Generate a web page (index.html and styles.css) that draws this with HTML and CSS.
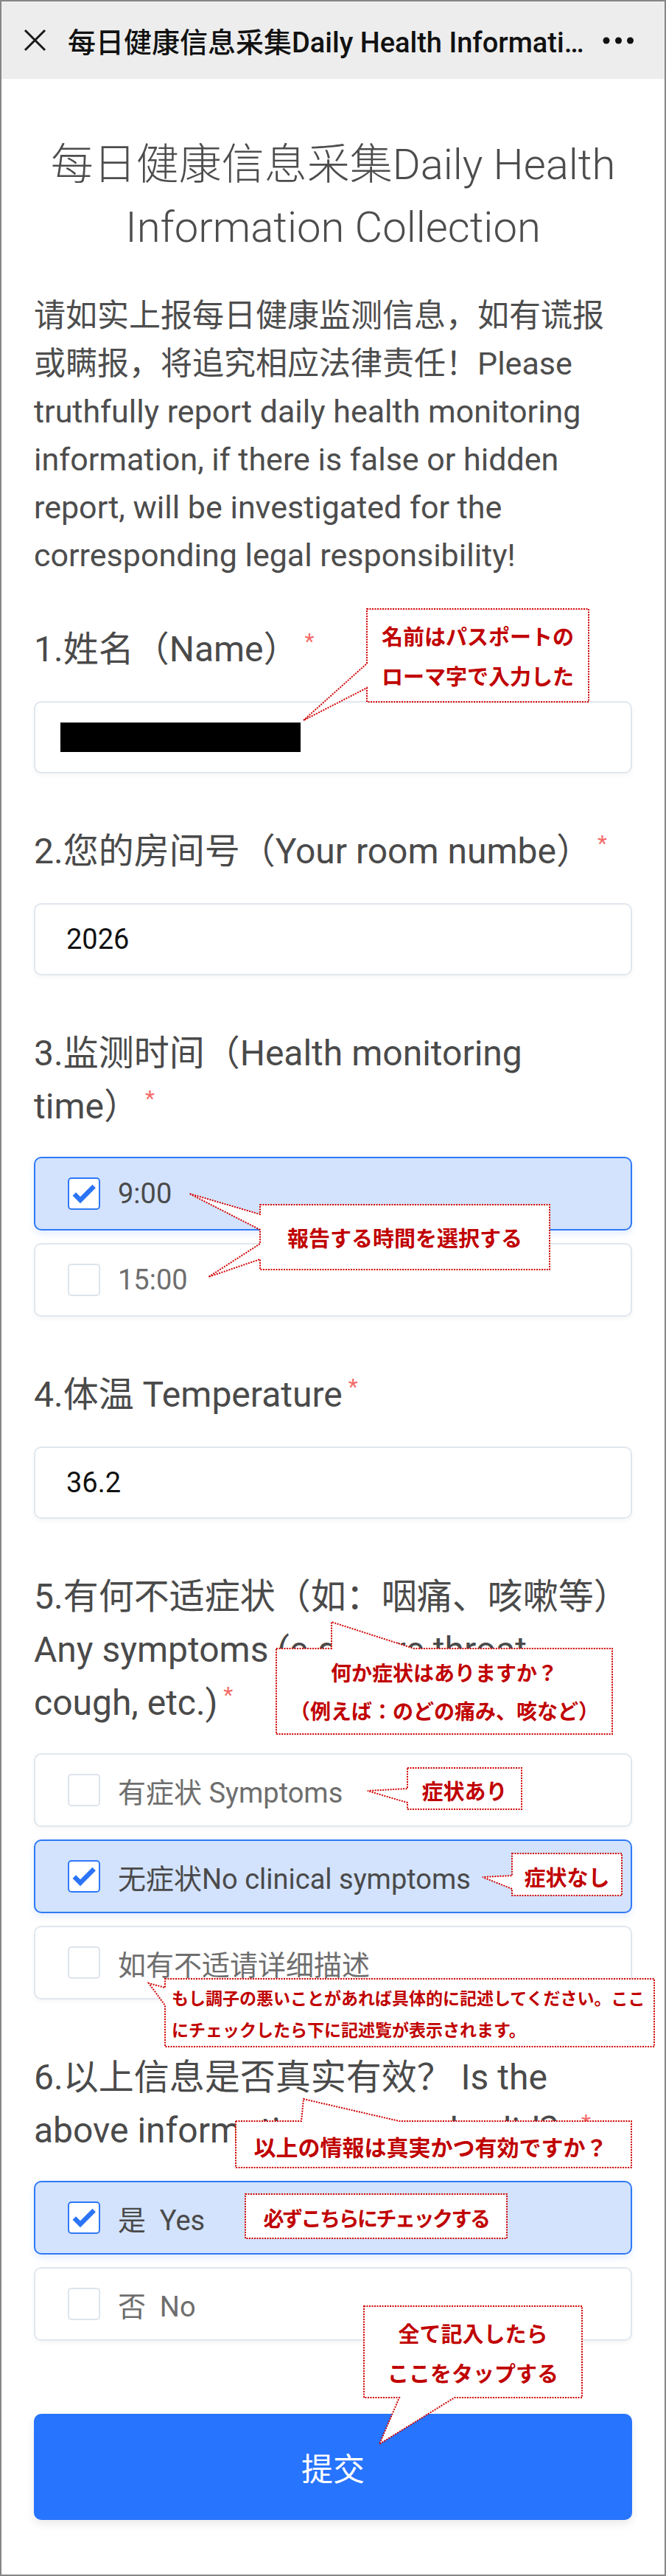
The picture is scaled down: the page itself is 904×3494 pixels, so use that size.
FILE: index.html
```html
<!DOCTYPE html>
<html lang="zh-CN">
<head>
    <meta charset="UTF-8">
    <meta name="viewport" content="width=device-width, initial-scale=1.0">
    <title>每日健康信息采集Daily Health Information Collection</title>
    <link rel="stylesheet" href="styles.css">
</head>
<body>

    <div class="phone">
        <header class="topbar">
            <svg class="close-icon" width="31" height="31" viewBox="0 0 31 31">
                <path d="M2 2 L29 29 M29 2 L2 29" />
            </svg>
            <div class="topbar-title">每日健康信息采集Daily Health Information Collection</div>
            <svg class="more-icon" width="42" height="10" viewBox="0 0 42 10">
                <circle cx="5" cy="5" r="4.5" />
                <circle cx="21.5" cy="5" r="4.5" />
                <circle cx="37.5" cy="5" r="4.5" />
            </svg>
        </header>

        <main class="survey">
            <h1 class="survey-title">每日健康信息采集Daily Health Information Collection</h1>
            <p class="survey-desc">请如实上报每日健康监测信息，如有谎报或瞒报，将追究相应法律责任！Please truthfully report daily health monitoring information, if there is false or hidden report, will be investigated for the corresponding legal responsibility!</p>

            <!-- 1 -->
            <div class="question">
                <div class="question-title">1.姓名（Name）<span class="required">*</span></div>
                <div class="text-box name-box"><span class="redacted"></span></div>
            </div>

            <!-- 2 -->
            <div class="question">
                <div class="question-title">2.您的房间号（Your room numbe）<span class="required">*</span></div>
                <div class="text-box">2026</div>
            </div>

            <!-- 3 -->
            <div class="question">
                <div class="question-title">3.监测时间（Health monitoring time）<span class="required">*</span></div>
                <div class="options">
                    <div class="option checked">
                        <span class="checkbox"><svg viewBox="0 0 44 44"><path d="M7.5 22.5 L16.5 31.5 L37 11" /></svg></span>
                        <span class="option-text">9:00</span>
                    </div>
                    <div class="option">
                        <span class="checkbox"></span>
                        <span class="option-text">15:00</span>
                    </div>
                </div>
            </div>

            <!-- 4 -->
            <div class="question">
                <div class="question-title">4.体温 Temperature<span class="required">*</span></div>
                <div class="text-box">36.2</div>
            </div>

            <!-- 5 -->
            <div class="question">
                <div class="question-title">5.有何不适症状（如：咽痛、咳嗽等）Any symptoms (e.g. sore throat, cough, etc.)<span class="required">*</span></div>
                <div class="options">
                    <div class="option">
                        <span class="checkbox"></span>
                        <span class="option-text">有症状 Symptoms</span>
                    </div>
                    <div class="option checked">
                        <span class="checkbox"><svg viewBox="0 0 44 44"><path d="M7.5 22.5 L16.5 31.5 L37 11" /></svg></span>
                        <span class="option-text">无症状No clinical symptoms</span>
                    </div>
                    <div class="option">
                        <span class="checkbox"></span>
                        <span class="option-text">如有不适请详细描述</span>
                    </div>
                </div>
            </div>

            <!-- 6 -->
            <div class="question">
                <div class="question-title">6.以上信息是否真实有效？ Is the above information true and valid？<span class="required">*</span></div>
                <div class="options">
                    <div class="option checked">
                        <span class="checkbox"><svg viewBox="0 0 44 44"><path d="M7.5 22.5 L16.5 31.5 L37 11" /></svg></span>
                        <span class="option-text">是&nbsp; Yes</span>
                    </div>
                    <div class="option">
                        <span class="checkbox"></span>
                        <span class="option-text">否&nbsp; No</span>
                    </div>
                </div>
            </div>

            <button class="submit-btn">提交</button>
        </main>
    </div>

    <!-- 注释气泡 -->
    <div class="note note-name" lang="ja">
        <svg width="303" height="128"><path d="M1 1 H302 V127 H1 V108 L-85 152 L1 75 Z" /></svg>
        <div class="note-text">名前はパスポートの<br>ローマ字で入力した</div>
    </div>

    <div class="note note-time" lang="ja">
        <svg width="395" height="90"><path d="M1 1 H394 V89 H1 V75 L-69 99 L1 54 V35 L-95 -14 L1 14 Z" /></svg>
        <div class="note-text">報告する時間を選択する</div>
    </div>

    <div class="note note-ask" lang="ja">
        <svg width="458" height="118"><path d="M1 1 H76 L76 -35 L188 1 H457 V117 H1 Z" /></svg>
        <div class="note-text">何か症状はありますか？<br>（例えば：のどの痛み、咳など）</div>
    </div>

    <div class="note note-yes" lang="ja">
        <svg width="157" height="58"><path d="M1 1 H156 V57 H1 V48 L-53 32 L1 29 Z" /></svg>
        <div class="note-text">症状あり</div>
    </div>

    <div class="note note-no" lang="ja">
        <svg width="151" height="59"><path d="M1 1 H150 V58 H1 V49 L-39 33 L1 31 Z" /></svg>
        <div class="note-text">症状なし</div>
    </div>

    <div class="note note-detail" lang="ja">
        <svg width="666" height="94"><path d="M1 1 H665 V93 H1 V37 L-21 7 L1 13 Z" /></svg>
        <div class="note-text">もし調子の悪いことがあれば具体的に記述してください。ここ<br>にチェックしたら下に記述覧が表示されます。</div>
    </div>

    <div class="note note-valid" lang="ja">
        <svg width="539" height="65"><path d="M1 1 H90 L93 -29 L223 1 H538 V64 H1 Z" /></svg>
        <div class="note-text">以上の情報は真実かつ有効ですか？</div>
    </div>

    <div class="note note-must" lang="ja">
        <svg width="357" height="62"><path d="M1 1 H356 V61 H1 Z" /></svg>
        <div class="note-text">必ずこちらにチェックする</div>
    </div>

    <div class="note note-submit" lang="ja">
        <svg width="298" height="126"><path d="M1 1 H297 V125 H124 L22 188 L49 125 H1 Z" /></svg>
        <div class="note-text">全て記入したら<br>ここをタップする</div>
    </div>

</body>
</html>
```

FILE: styles.css
```css
* {
    margin: 0;
    padding: 0;
    box-sizing: border-box;
}

body {
    position: relative;
    width: 904px;
    background: #fff;
    font-family: Roboto, "Noto Sans CJK SC", sans-serif;
    color: #4a4a4a;
}

.phone {
    width: 904px;
    height: 3494px;
    border: 2px solid #868686;
    overflow: hidden;
}

/* 顶部栏 */
.topbar {
    display: flex;
    align-items: center;
    height: 105px;
    padding: 0 42px 0 30px;
    background: #ededed;
}

.close-icon {
    flex: none;
    margin-right: 29px;
}

.close-icon path {
    stroke: #1a1a1a;
    stroke-width: 3;
    fill: none;
}

.topbar-title {
    flex: 1;
    min-width: 0;
    margin-right: 22px;
    font-size: 38px;
    font-weight: 500;
    color: #111;
    white-space: nowrap;
    overflow: hidden;
    text-overflow: ellipsis;
}

.more-icon {
    flex: none;
    fill: #111;
}

/* 表单 */
.survey {
    padding: 0 44px;
    text-spacing-trim: space-all;
}

.survey-title {
    margin: 74px 0 45px;
    font-size: 58px;
    line-height: 85px;
    font-weight: 300;
    color: #4d4d4d;
    text-align: center;
}

.survey-desc {
    margin-bottom: 59px;
    font-size: 43px;
    line-height: 65px;
    color: #4d4d4d;
}

.question + .question {
    margin-top: 70px;
}

.question-title {
    font-size: 48px;
    line-height: 72px;
    color: #4a4a4a;
}

.required {
    margin-left: 8px;
    font-size: 30px;
    line-height: 50px;
    vertical-align: top;
    color: #f46a66;
}

.text-box {
    display: flex;
    align-items: center;
    height: 98px;
    margin-top: 34px;
    padding-left: 42px;
    border: 2px solid #e0e7ee;
    border-radius: 10px;
    box-shadow: 0 3px 6px rgba(0, 0, 0, 0.04);
    font-size: 38px;
    color: #111;
}

.name-box {
    padding-left: 34px;
}

.redacted {
    display: block;
    width: 326px;
    height: 40px;
    background: #000;
}

.options {
    display: flex;
    flex-direction: column;
    gap: 17px;
    margin-top: 32px;
}

.option {
    display: flex;
    align-items: center;
    height: 100px;
    padding-left: 44px;
    border: 2px solid #e0e7ee;
    border-radius: 10px;
    background: #fff;
    box-shadow: 0 3px 6px rgba(0, 0, 0, 0.04);
    font-size: 38px;
    color: #6e6e6e;
}

.option.checked {
    background: #d3e3fd;
    border-color: #2f79f6;
    box-shadow: 0 5px 10px rgba(47, 121, 246, 0.12);
    color: #4a4a4a;
}

.checkbox {
    flex: none;
    width: 44px;
    height: 44px;
    border: 2px solid #dde4ec;
    border-radius: 5px;
    background: #fff;
}

.option.checked .checkbox {
    border-color: #2f79f6;
}

.checkbox svg {
    display: block;
    width: 40px;
    height: 40px;
}

.checkbox path {
    fill: none;
    stroke: #2b74f5;
    stroke-width: 7;
    stroke-linejoin: miter;
}

.option-text {
    margin-left: 24px;
}

.submit-btn {
    display: block;
    width: 100%;
    height: 144px;
    margin-top: 99px;
    border: none;
    border-radius: 10px;
    background: #2774fe;
    box-shadow: 0 6px 12px rgba(0, 0, 0, 0.08);
    font-family: Roboto, "Noto Sans CJK SC", sans-serif;
    font-size: 43px;
    color: #fff;
}

/* 注释气泡 */
.note {
    position: absolute;
    display: flex;
    align-items: center;
    justify-content: center;
    font-family: "Noto Sans CJK JP", sans-serif;
    font-weight: 700;
    color: #c00000;
    white-space: nowrap;
}

.note svg {
    position: absolute;
    left: 0;
    top: 0;
    overflow: visible;
}

.note path {
    fill: #fff;
    stroke: #d00000;
    stroke-width: 2;
    stroke-dasharray: 2 1.5;
}

.note-text {
    position: relative;
    font-size: 29px;
    line-height: 54px;
    text-align: center;
}

.note-name {
    left: 497px;
    top: 825px;
    width: 303px;
    height: 128px;
}

.note-time {
    left: 352px;
    top: 1633px;
    width: 395px;
    height: 90px;
}

.note-ask {
    left: 374px;
    top: 2235px;
    width: 458px;
    height: 118px;
}

.note-ask .note-text {
    font-size: 28px;
    line-height: 52px;
}

.note-yes {
    left: 552px;
    top: 2397px;
    width: 157px;
    height: 58px;
    padding-top: 4px;
}

.note-no {
    left: 694px;
    top: 2513px;
    width: 151px;
    height: 59px;
    padding-top: 5px;
}

.note-detail {
    left: 223px;
    top: 2683px;
    width: 666px;
    height: 94px;
    justify-content: flex-start;
    padding: 2px 0 0 10px;
}

.note-detail .note-text {
    font-size: 23px;
    line-height: 43px;
    text-align: left;
}

.note-valid {
    left: 319px;
    top: 2876px;
    width: 539px;
    height: 65px;
    padding: 4px 8px 0 0;
}

.note-valid .note-text {
    font-size: 30px;
}

.note-must {
    left: 332px;
    top: 2975px;
    width: 357px;
    height: 62px;
    padding-top: 4px;
}

.note-must .note-text {
    font-size: 28px;
    letter-spacing: -2.5px;
}

.note-submit {
    left: 493px;
    top: 3127px;
    width: 298px;
    height: 126px;
    padding-top: 2px;
}
```
